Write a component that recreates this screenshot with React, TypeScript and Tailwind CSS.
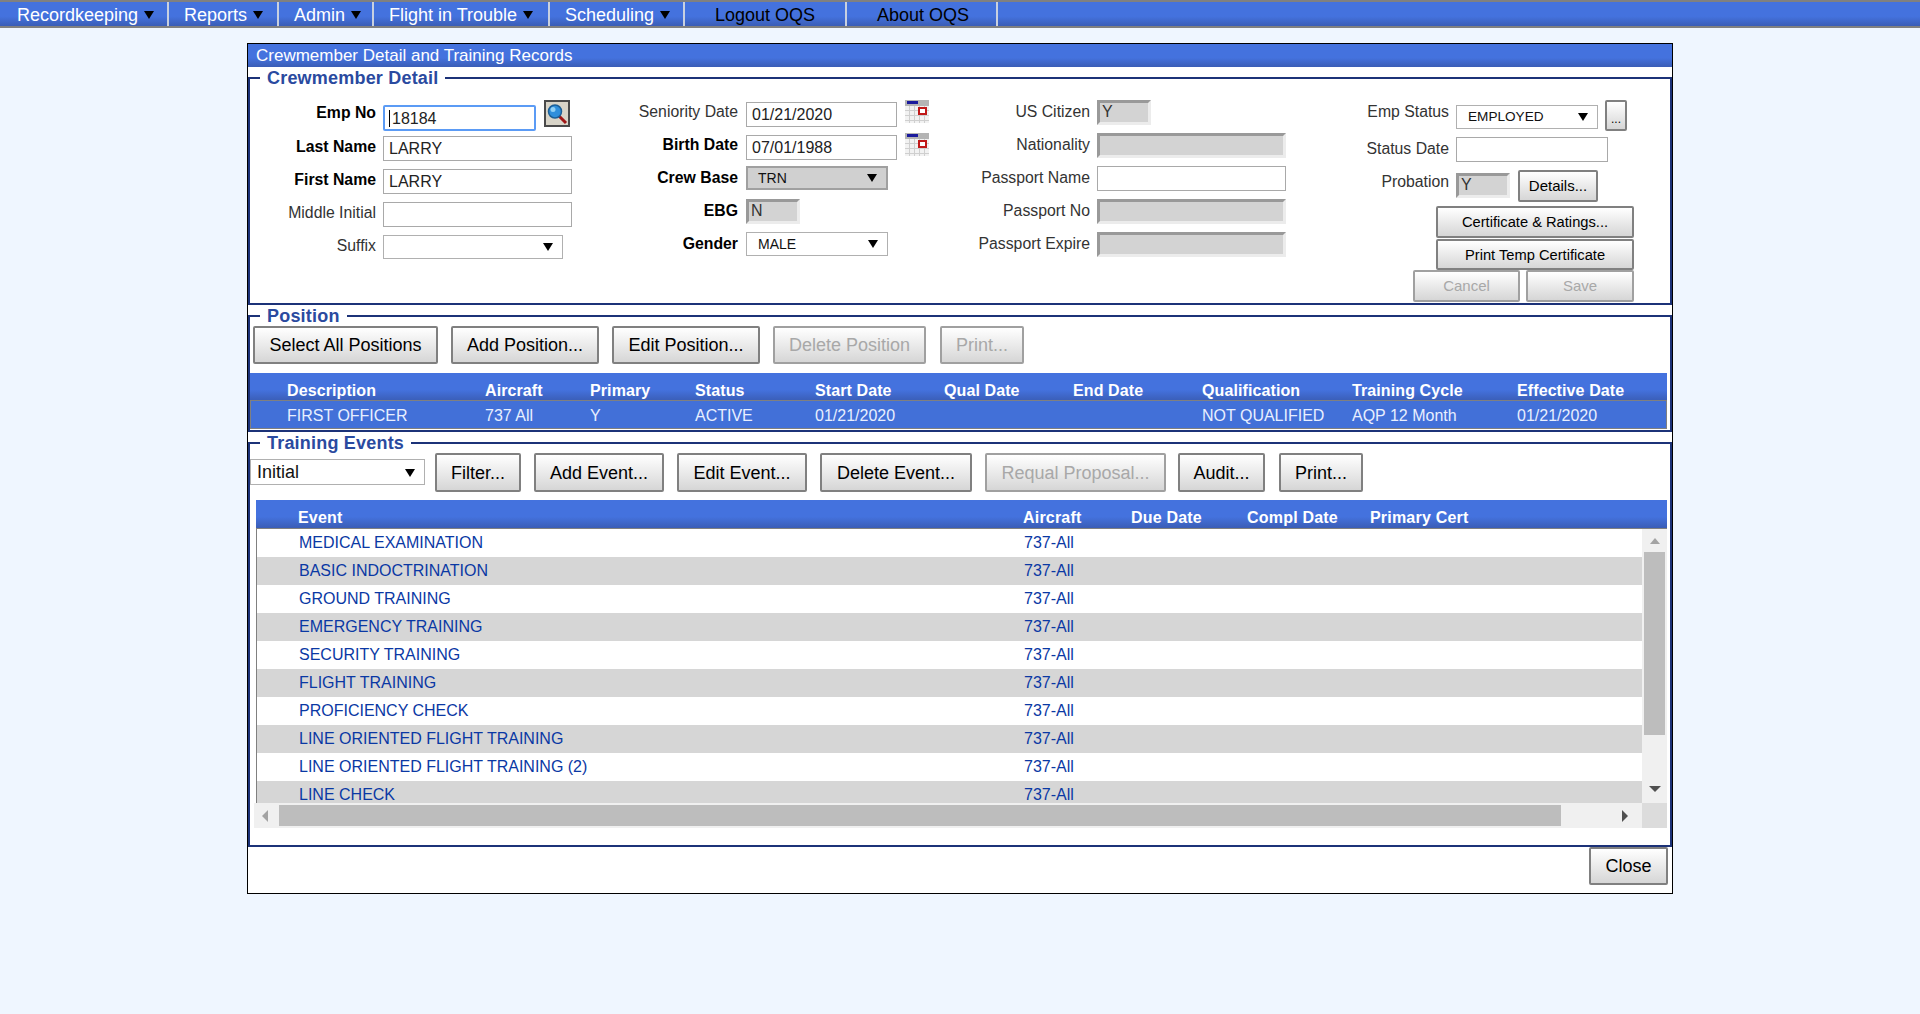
import React from "react";

const grad = "bg-gradient-to-b from-[#4472de] from-60% to-[#3a5db6]";
const btnBase = "flex items-center justify-center rounded-[2px] border-2 border-[#808080] bg-gradient-to-b from-white to-[#d6d6d6] whitespace-nowrap";

function Btn({ w, h = "h-[38px]", text = "text-[18px] pt-px", off, children }: { w: string; h?: string; text?: string; off?: boolean; children: React.ReactNode }) {
  return (
    <button className={`${btnBase} ${w} ${h} ${text} ${off ? "text-[#a8a8a8] border-[#a0a0a0]" : "text-black"}`}>
      {children}
    </button>
  );
}

function Caret({ color = "border-t-black" }: { color?: string }) {
  return <span className={`inline-block w-0 h-0 border-x-[5px] border-x-transparent border-t-[8px] ${color}`} />;
}

function Input({ w, value = "", mt = "mt-0" }: { w: string; value?: string; mt?: string }) {
  return (
    <input
      readOnly
      value={value}
      className={`${w} ${mt} h-[25px] bg-white border border-[#a9a9a9] pl-[5px] text-[16px] text-[#222] outline-none`}
    />
  );
}

function Disabled({ w, value = "", mt = "mt-0" }: { w: string; value?: string; mt?: string }) {
  return (
    <div className={`${w} ${mt} h-[25px] bg-[#d3d3d3] border-[3px] border-t-[#999] border-l-[#999] border-r-[#ececec] border-b-[#ececec] text-[16px] leading-[18px] pl-[2px] text-[#333]`}>
      {value}
    </div>
  );
}

function Select({ w, value = "", gray, mt = "mt-0", text = "text-[14px]", pl = "pl-[11px]", pr = "pr-[9px]" }: { w: string; value?: string; gray?: boolean; mt?: string; text?: string; pl?: string; pr?: string }) {
  return (
    <div className={`${w} ${mt} h-[24px] flex items-center justify-between ${pl} ${pr} ${text} text-[#111] ${gray ? "bg-[#d0d0d0] border-2 border-[#a0a0a0]" : "bg-white border border-[#b0b0b0]"}`}>
      <span>{value}</span>
      <Caret />
    </div>
  );
}

function Field({ label, labelW, bold, labelMt = "mt-[4px]", h = "h-[33px]", children }: { label: string; labelW: string; bold?: boolean; labelMt?: string; h?: string; children: React.ReactNode }) {
  return (
    <div className={`flex items-start gap-[7px] ${h}`}>
      <label className={`${labelW} ${labelMt} text-right text-[15.8px] leading-[16px] whitespace-nowrap ${bold ? "font-bold text-black" : "text-[#333]"}`}>{label}</label>
      {children}
    </div>
  );
}

function Calendar() {
  return (
    <svg width="24" height="23" viewBox="0 0 24 23" className="ml-[8px] shrink-0" aria-hidden="true">
      <rect x="0" y="0" width="24" height="23" fill="#f2f2f2" />
      <rect x="0" y="0" width="24" height="6" fill="#b4b4b4" />
      <rect x="2" y="1" width="11" height="3" fill="#1a1a9c" />
      <path d="M0 10.5H24M0 15.5H24M0 20.5H24M4.5 6V23M9.5 6V23M14.5 6V23M19.5 6V23" stroke="#cfcfcf" />
      <rect x="14" y="8" width="7" height="6" fill="#fff" stroke="#c01818" strokeWidth="2" />
    </svg>
  );
}

function Search() {
  return (
    <div className="ml-[9px] w-[26px] h-[27px] flex items-center justify-center bg-[#d8d4c8] border-2 border-[#4a4a4a] shrink-0">
      <svg width="22" height="23" viewBox="0 0 22 23" aria-hidden="true">
        <line x1="13" y1="14" x2="20" y2="21" stroke="#a01616" strokeWidth="3" />
        <circle cx="9" cy="9.5" r="6.5" fill="#2f8fdc" stroke="#1c5f96" strokeWidth="1.5" />
        <circle cx="7" cy="7.5" r="2.5" fill="#8fd0f5" />
      </svg>
    </div>
  );
}

function Fieldset({ title, className, children }: { title: string; className: string; children: React.ReactNode }) {
  return (
    <fieldset className={`border-2 border-[#1c3278] min-w-0 ${className}`}>
      <legend className="ml-[10px] px-[7px] h-[20px] text-[18px] leading-[20px] tracking-[0.2px] font-bold text-[#2a4a9f]">{title}</legend>
      {children}
    </fieldset>
  );
}

const navItems = [
  { t: "Recordkeeping", w: "w-[169px]", p: "pl-[17px]", c: true },
  { t: "Reports", w: "w-[110px]", p: "pl-[15px]", c: true },
  { t: "Admin", w: "w-[95px]", p: "pl-[15px]", c: true },
  { t: "Flight in Trouble", w: "w-[176px]", p: "pl-[15px]", c: true },
  { t: "Scheduling", w: "w-[135px]", p: "pl-[15px]", c: true },
  { t: "Logout OQS", w: "w-[162px]", p: "pl-[30px]", c: false },
  { t: "About OQS", w: "w-[151px]", p: "pl-[30px]", c: false },
];

const posHead = ["Description", "Aircraft", "Primary", "Status", "Start Date", "Qual Date", "End Date", "Qualification", "Training Cycle", "Effective Date"];
const posRow = ["FIRST OFFICER", "737 All", "Y", "ACTIVE", "01/21/2020", "", "", "NOT QUALIFIED", "AQP 12 Month", "01/21/2020"];
const posCols = "grid grid-cols-[198px_105px_105px_120px_129px_129px_129px_150px_165px_1fr]";

const events = [
  "MEDICAL EXAMINATION", "BASIC INDOCTRINATION", "GROUND TRAINING", "EMERGENCY TRAINING", "SECURITY TRAINING",
  "FLIGHT TRAINING", "PROFICIENCY CHECK", "LINE ORIENTED FLIGHT TRAINING", "LINE ORIENTED FLIGHT TRAINING (2)", "LINE CHECK",
];

export default function App() {
  return (
    <div className="min-h-[1014px] bg-[#eff6ff] font-['Liberation_Sans',Arial,sans-serif] text-[16px] overflow-hidden">
      <nav className={`h-[28px] flex border-y-2 border-[#808080] ${grad}`}>
        {navItems.map((n) => (
          <div key={n.t} className={`${n.w} ${n.p} pt-[2px] flex items-center gap-[6px] border-r-2 border-[#c8d0e0] text-[18px] leading-[24px] ${n.c ? "text-white" : "text-black"}`}>
            <span>{n.t}</span>
            {n.c && <span className="inline-block w-0 h-0 border-x-[5.5px] border-x-transparent border-t-[8px] border-t-black" />}
          </div>
        ))}
      </nav>

      <main className="ml-[247px] mt-[15px] w-[1426px] h-[851px] border border-black bg-white flex flex-col">
        <div className={`h-[23px] shrink-0 pl-[8px] text-[17px] leading-[23px] text-white ${grad}`}>Crewmember Detail and Training Records</div>

        <Fieldset title="Crewmember Detail" className="mt-px h-[237px] shrink-0">
          <div className="flex pt-[12px]">
            <div className="w-[350px] flex flex-col">
              <Field label="Emp No" labelW="w-[126px]" bold labelMt="mt-[5px]">
                <div className="relative mt-[5px]">
                  <input readOnly value="18184" className="w-[153px] h-[26px] pl-[7px] pt-[2px] text-[16px] text-[#222] border-2 border-[#5b9bf5] rounded-[2px] outline-none" />
                  <span className="absolute left-[6px] top-[5px] w-px h-[17px] bg-black" />
                </div>
                <div className="-ml-[8px]"><Search /></div>
              </Field>
              <Field label="Last Name" labelW="w-[126px]" bold labelMt="mt-[6px]"><Input w="w-[189px]" value="LARRY" mt="mt-[3px]" /></Field>
              <Field label="First Name" labelW="w-[126px]" bold labelMt="mt-[6px]"><Input w="w-[189px]" value="LARRY" mt="mt-[3px]" /></Field>
              <Field label="Middle Initial" labelW="w-[126px]" labelMt="mt-[6px]"><Input w="w-[189px]" mt="mt-[3px]" /></Field>
              <Field label="Suffix" labelW="w-[126px]" labelMt="mt-[6px]"><Select w="w-[180px]" mt="mt-[3px]" /></Field>
            </div>
            <div className="w-[350px] flex flex-col">
              <Field label="Seniority Date" labelW="w-[138px]">
                <Input w="w-[151px] ml-px" value="01/21/2020" mt="mt-[2px]" />
                <div className="-ml-[7px]"><Calendar /></div>
              </Field>
              <Field label="Birth Date" labelW="w-[138px]" bold>
                <Input w="w-[151px] ml-px" value="07/01/1988" mt="mt-[2px]" />
                <div className="-ml-[7px]"><Calendar /></div>
              </Field>
              <Field label="Crew Base" labelW="w-[138px]" bold><Select w="w-[142px] ml-px" value="TRN" gray pl="pl-[10px]" /></Field>
              <Field label="EBG" labelW="w-[138px]" bold><Disabled w="w-[54px] ml-px" value="N" /></Field>
              <Field label="Gender" labelW="w-[138px]" bold><Select w="w-[142px] ml-px" value="MALE" /></Field>
            </div>
            <div className="w-[350px] flex flex-col">
              <Field label="US Citizen" labelW="w-[140px]"><Disabled w="w-[54px]" value="Y" /></Field>
              <Field label="Nationality" labelW="w-[140px]"><Disabled w="w-[189px]" /></Field>
              <Field label="Passport Name" labelW="w-[140px]"><Input w="w-[189px]" /></Field>
              <Field label="Passport No" labelW="w-[140px]"><Disabled w="w-[189px]" /></Field>
              <Field label="Passport Expire" labelW="w-[140px]"><Disabled w="w-[189px]" /></Field>
            </div>
            <div className="flex flex-col">
              <Field label="Emp Status" labelW="w-[149px]">
                <Select w="w-[142px]" value="EMPLOYED" mt="mt-[5px]" text="text-[13.6px]" pl="pl-[11px]" pr="pr-[9px]" />
                <Btn w="w-[22px]" h="h-[31px]" text="text-[12px] pt-[6px]">...</Btn>
              </Field>
              <Field label="Status Date" labelW="w-[149px]" labelMt="mt-[8px]" h="h-[37px]"><Input w="w-[152px]" mt="mt-[4px]" /></Field>
              <Field label="Probation" labelW="w-[149px]" labelMt="mt-[4px]" h="h-[36px]">
                <Disabled w="w-[54px]" value="Y" mt="mt-[3px]" />
                <div className="ml-px"><Btn w="w-[80px]" h="h-[32px]" text="text-[15px]">Details...</Btn></div>
              </Field>
              <div className="ml-[136px] flex flex-col w-[198px]">
                <Btn w="w-[198px]" h="h-[32px]" text="text-[14.7px] pt-px">Certificate &amp; Ratings...</Btn>
                <div className="mt-px"><Btn w="w-[198px]" h="h-[31px]" text="text-[14.7px] pt-px">Print Temp Certificate</Btn></div>
                <div className="-ml-[23px] flex gap-[6px]">
                  <Btn w="w-[107px]" h="h-[32px]" text="text-[15px] pt-px" off>Cancel</Btn>
                  <Btn w="w-[108px]" h="h-[32px]" text="text-[15px] pt-px" off>Save</Btn>
                </div>
              </div>
            </div>
          </div>
        </Fieldset>

        <Fieldset title="Position" className="mt-px h-[126px] shrink-0">
          <div className="flex pl-[3px] h-[38px]">
            <Btn w="w-[185px]">Select All Positions</Btn>
            <div className="ml-[13px]"><Btn w="w-[148px]">Add Position...</Btn></div>
            <div className="ml-[13px]"><Btn w="w-[148px]">Edit Position...</Btn></div>
            <div className="ml-[13px]"><Btn w="w-[153px]" off>Delete Position</Btn></div>
            <div className="ml-[14px]"><Btn w="w-[84px]" off>Print...</Btn></div>
          </div>
          <div className="mt-[9px] mr-[3px]">
            <div className={`h-[28px] pl-[37px] text-[16px] leading-[36px] tracking-[0.1px] font-bold text-white ${grad} ${posCols}`}>
              {posHead.map((h) => <span key={h}>{h}</span>)}
            </div>
            <div className={`h-[29px] pl-[36px] border border-[#808080] -mt-px bg-[#4270d8] text-[16px] leading-[28px] text-[#e8efff] pt-px ${posCols}`}>
              {posRow.map((c, i) => <span key={i}>{c}</span>)}
            </div>
          </div>
        </Fieldset>

        <Fieldset title="Training Events" className="mt-px h-[414px] shrink-0">
          <div className="flex h-[39px]">
            <Select w="w-[175px]" value="Initial" mt="mt-[6px]" text="text-[18px] pt-px h-[26px]" pl="pl-[6px]" pr="pr-[9px]" />
            {[
              { t: "Filter...", w: "w-[86px]", m: "ml-[10px]" },
              { t: "Add Event...", w: "w-[130px]", m: "ml-[13px]" },
              { t: "Edit Event...", w: "w-[130px]", m: "ml-[13px]" },
              { t: "Delete Event...", w: "w-[152px]", m: "ml-[13px]" },
              { t: "Requal Proposal...", w: "w-[181px]", m: "ml-[13px]", off: true },
              { t: "Audit...", w: "w-[87px]", m: "ml-[12px]" },
              { t: "Print...", w: "w-[84px]", m: "ml-[14px]" },
            ].map((b) => (
              <div key={b.t} className={b.m}><Btn w={b.w} h="h-[39px]" off={b.off}>{b.t}</Btn></div>
            ))}
          </div>
          <div className="mt-[8px] ml-[6px] mr-[3px]">
            <div className={`h-[29px] grid grid-cols-[725px_108px_116px_123px_1fr] pl-[42px] text-[16px] leading-[35px] tracking-[0.2px] font-bold text-white border-b border-[#808080] ${grad}`}>
              <span>Event</span><span>Aircraft</span><span>Due Date</span><span>Compl Date</span><span>Primary Cert</span>
            </div>
            <div className="flex h-[274px]">
              <div className="w-[1386px] overflow-hidden border-l border-[#808080]">
                {events.map((e, i) => (
                  <div key={e} className={`h-[28px] shrink-0 grid grid-cols-[725px_1fr] pl-[42px] text-[16px] leading-[27px] text-[#0a38a4] ${i % 2 ? "bg-[#d6d6d6]" : "bg-white"}`}>
                    <span>{e}</span><span>737-All</span>
                  </div>
                ))}
              </div>
              <div className="w-[25px] bg-[#f0f0f0] flex flex-col items-center pt-[9px] pb-[11px]">
                <span className="w-0 h-0 border-x-[5px] border-x-transparent border-b-[6px] border-b-[#a3a3a3]" />
                <div className="mt-[8px] w-[21px] h-[183px] bg-[#bdbdbd]" />
                <span className="mt-auto w-0 h-0 border-x-[6px] border-x-transparent border-t-[6px] border-t-[#505050]" />
              </div>
            </div>
            <div className="-ml-[2px] flex h-[25px] bg-[#f0f0f0] items-center">
              <span className="ml-[8px] w-0 h-0 border-y-[6px] border-y-transparent border-r-[6px] border-r-[#a3a3a3]" />
              <div className="ml-[11px] w-[1282px] h-[21px] bg-[#bdbdbd]" />
              <span className="ml-[61px] w-0 h-0 border-y-[6px] border-y-transparent border-l-[6px] border-l-[#505050]" />
              <div className="ml-auto w-[25px] h-[25px] bg-[#dcdcdc]" />
            </div>
          </div>
        </Fieldset>

        <footer className="flex justify-end pr-[4px]">
          <Btn w="w-[79px]" text="text-[18px]">Close</Btn>
        </footer>
      </main>
    </div>
  );
}
